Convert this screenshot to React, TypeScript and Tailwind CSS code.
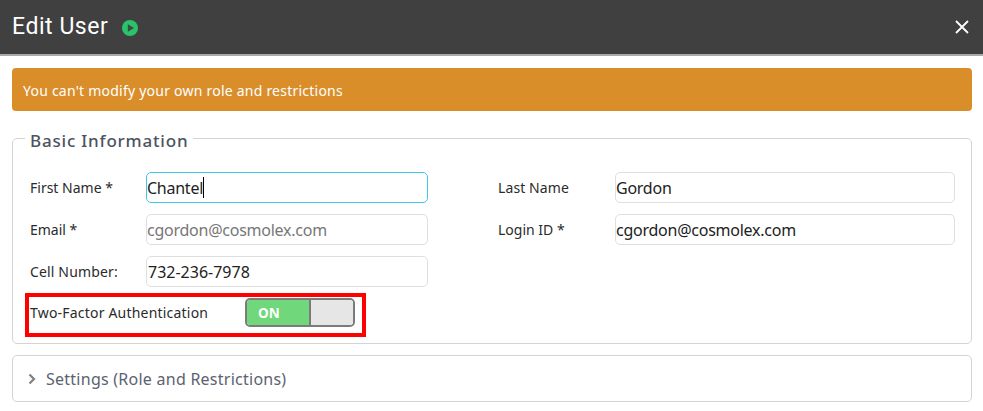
import React from "react";

function Field({ label, value, labelW, focus, muted, width, digits, labelTrack }: { label: string; value: string; labelW: string; focus?: boolean; muted?: boolean; width: string; digits?: boolean; labelTrack?: string }) {
  return (
    <div className="flex items-center">
      <label className={`${labelW} ${labelTrack ?? ""} shrink-0 text-[14px] leading-[20px] text-[#2b2b2b]`}>{label}</label>
      <div className={`relative ${width}`}>
        <input
          readOnly
          value={value}
          className={`block h-[31px] w-full rounded-[5px] border bg-white text-[16px] outline-none ${digits ? "pl-[1px]" : "pl-0 tracking-[-0.25px]"} ${focus ? "border-[#3fc8ea]" : "border-[#dfdfdf]"} ${muted ? "text-[#777777]" : "text-[#222222]"}`}
        />
        {focus && <span className="absolute left-[57px] top-[5px] h-[21px] w-[1px] bg-black" />}
      </div>
    </div>
  );
}

export default function App() {
  return (
    <div className="h-[411px] w-[983px] overflow-hidden bg-white font-['Noto_Sans',sans-serif]">
      <header className="flex h-[56px] items-center justify-between border-b-2 border-[#a9a9a9] bg-[#404041] pl-[12px] pr-[14px]">
        <div className="flex items-center">
          <h1 className="font-['Roboto',sans-serif] text-[23px] font-normal leading-[52px] tracking-[0.55px] text-white">Edit User</h1>
          <svg className="ml-[14px] mt-[2px]" width="16" height="16" viewBox="0 0 16 16">
            <circle cx="8" cy="8" r="8" fill="#2ac26a" />
            <path d="M5.8 4.2 L12 8 L5.8 11.8 Z" fill="#3c4a42" />
          </svg>
        </div>
        <svg width="14" height="14" viewBox="0 0 14 14" className="mb-[1px]">
          <path d="M1 1 L13 13 M13 1 L1 13" stroke="#ffffff" strokeWidth="1.8" />
        </svg>
      </header>

      <div className="pl-[12px] pr-[11px]">
        <div className="mt-[12px] flex h-[43px] items-center rounded-[4px] bg-[#da8e2a] pl-[11px] pt-[1px] text-[14px] tracking-[0.23px] text-white">
          You can't modify your own role and restrictions
        </div>

        <fieldset className="mt-[12px] h-[221px] rounded-[5px] border border-[#d4d4d4] pl-[17px] pr-[16px]">
          <legend className="-ml-[5px] px-[5px] pt-[6px] text-[17px] font-medium leading-[24px] tracking-[0.8px] text-[#4d5360]">Basic Information</legend>
          <div className="mt-[19px] flex justify-between">
            <div className="flex flex-col gap-[11px]">
              <Field label="First Name *" value="Chantel" labelW="w-[116px]" width="w-[282px]" focus />
              <Field label="Email *" value="cgordon@cosmolex.com" labelW="w-[116px]" width="w-[282px]" muted />
              <Field label="Cell Number:" value="732-236-7978" labelW="w-[116px]" width="w-[282px]" digits labelTrack="tracking-[0.15px]" />
            </div>
            <div className="flex flex-col gap-[11px]">
              <Field label="Last Name" value="Gordon" labelW="w-[117px]" width="w-[340px]" labelTrack="tracking-[0.1px]" />
              <Field label="Login ID *" value="cgordon@cosmolex.com" labelW="w-[117px]" width="w-[340px]" />
            </div>
          </div>
          <div className="-ml-[5px] mt-[6px] flex h-[44px] w-[341px] items-center border-[4px] border-[#ff0000] pb-[5px] pl-[1px]">
            <span className="w-[215px] shrink-0 text-[14px] tracking-[0.2px] text-[#2b2b2b]">Two-Factor Authentication</span>
            <div className="flex h-[29px] w-[110px] shrink-0 overflow-hidden rounded-[5px] border-2 border-[#7b7b7b]">
              <div className="flex w-[62px] items-center bg-[#70d87b] pl-[11px] pt-[1px] text-[13.5px] font-bold text-white">ON</div>
              <div className="flex-1 border-l-2 border-[#7b7b7b] bg-[#e6e6e6]" />
            </div>
          </div>
        </fieldset>

        <div className="mt-[11px] flex h-[47px] items-center rounded-[5px] border border-[#d4d4d4] pl-[15px]">
          <svg width="8" height="12" viewBox="0 0 8 12">
            <path d="M1.5 1.5 L6 6 L1.5 10.5" fill="none" stroke="#808080" strokeWidth="2.2" />
          </svg>
          <span className="ml-[10px] pt-[1px] text-[16px] tracking-[0.25px] text-[#5c6270]">Settings (Role and Restrictions)</span>
        </div>
      </div>
    </div>
  );
}
